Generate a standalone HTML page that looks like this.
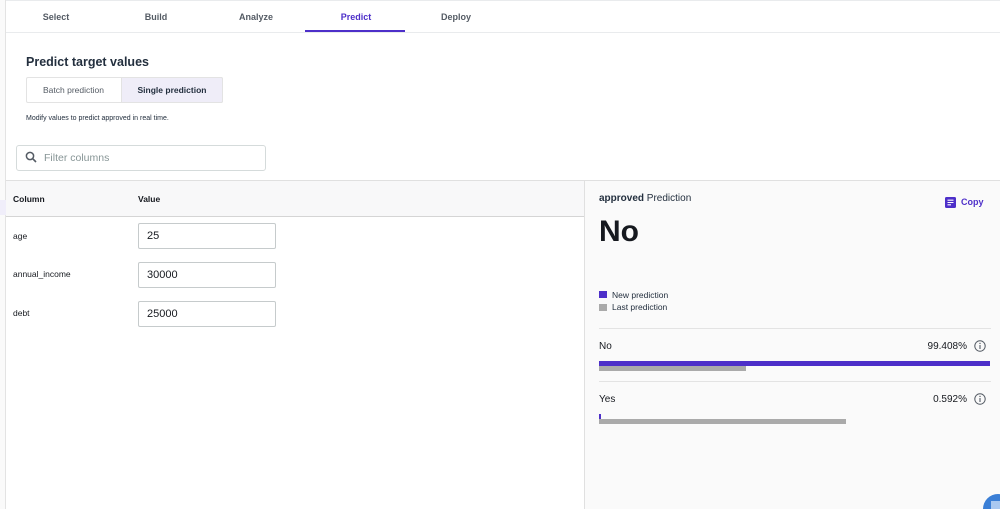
<!DOCTYPE html>
<html><head><style>
*{box-sizing:border-box;margin:0;padding:0}
html,body{width:1000px;height:509px;overflow:hidden}
body{background:#fff;font-family:"Liberation Sans",sans-serif;color:#16191f;position:relative}
.a{position:absolute}
.tab{position:absolute;top:0;height:32px;width:100px;text-align:center;line-height:34px;font-size:9px;font-weight:bold;color:#545b64}
.inp{position:absolute;left:138px;width:138px;height:26px;border:1px solid #c6cbcc;border-radius:2px;font-size:11px;padding-left:8px;line-height:24px;color:#16191f;background:#fff}
.lbl{position:absolute;left:13px;font-size:8.5px;color:#16191f}
</style></head><body>
<div class="a" style="left:0;top:0;width:6px;height:509px;background:#fafafa;border-right:1px solid #e3e3e3"></div>
<div class="a" style="left:0;top:200px;width:6px;height:15px;background:#f0eefa"></div>
<div class="a" style="left:6px;top:0;width:994px;height:1px;background:#e9ebed"></div>
<div class="a" style="left:6px;top:32px;width:994px;height:1px;background:#e9ebed"></div>
<div class="tab" style="left:6px">Select</div>
<div class="tab" style="left:106px">Build</div>
<div class="tab" style="left:206px">Analyze</div>
<div class="tab" style="left:306px;color:#4d2fc9">Predict</div>
<div class="tab" style="left:406px">Deploy</div>
<div class="a" style="left:305px;top:30px;width:100px;height:2px;background:#4d2fc9"></div>

<div class="a" style="left:26px;top:55px;font-size:12.5px;font-weight:bold;color:#232f3e">Predict target values</div>
<div class="a" style="left:26px;top:77px;width:197px;height:26px;border:1px solid #e3e3e3;border-radius:2px;background:#fff"></div>
<div class="a" style="left:121px;top:77px;width:102px;height:26px;background:#efedf8;border:1px solid #e3e3e3;border-radius:0 2px 2px 0"></div>
<div class="a" style="left:26px;top:77px;width:95px;line-height:26px;text-align:center;font-size:8.5px;color:#545b64">Batch prediction</div>
<div class="a" style="left:121px;top:77px;width:102px;line-height:26px;text-align:center;font-size:8.5px;font-weight:bold;color:#232f3e">Single prediction</div>
<div class="a" style="left:26px;top:115px;font-size:7px;color:#232f3e">Modify values to predict approved in real time.</div>

<div class="a" style="left:16px;top:145px;width:250px;height:26px;border:1px solid #d5dbdb;border-radius:3px;background:#fff"></div>
<svg class="a" style="left:25px;top:151px" width="12" height="12" viewBox="0 0 12 12"><circle cx="5" cy="5" r="3.6" fill="none" stroke="#545b64" stroke-width="1.5"/><path d="M7.6 7.6L11 11" stroke="#545b64" stroke-width="1.6"/></svg>
<div class="a" style="left:44px;top:152px;font-size:10.5px;color:#879596">Filter columns</div>

<div class="a" style="left:6px;top:180px;width:578px;height:37px;background:#f8f8f9;border-top:1px solid #e0e0e0;border-bottom:1px solid #d5d5d5"></div>
<div class="a" style="left:13px;top:194px;font-size:8.5px;font-weight:bold">Column</div>
<div class="a" style="left:138px;top:194px;font-size:8.5px;font-weight:bold">Value</div>
<div class="lbl" style="top:231px">age</div>
<div class="lbl" style="top:269px">annual_income</div>
<div class="lbl" style="top:308px">debt</div>
<div class="inp" style="top:223px">25</div>
<div class="inp" style="top:262px">30000</div>
<div class="inp" style="top:301px">25000</div>

<div class="a" style="left:584px;top:180px;width:416px;height:329px;background:#fafafa;border-left:1px solid #e0e0e0;border-top:1px solid #e0e0e0"></div>
<div class="a" style="left:599px;top:193px;font-size:10px;color:#232f3e"><b>approved</b> Prediction</div>
<svg class="a" style="left:945px;top:197px" width="11" height="11" viewBox="0 0 11 11"><rect width="11" height="11" rx="1.5" fill="#4d2fc9"/><path d="M2.5 3.2h6M2.5 5.5h6M2.5 7.8h3.5" stroke="#fff" stroke-width="1.1"/></svg>
<div class="a" style="left:961px;top:197px;font-size:9px;font-weight:bold;color:#4d2fc9">Copy</div>
<div class="a" style="left:599px;top:215px;font-size:30px;font-weight:bold;color:#16191f">No</div>
<div class="a" style="left:599px;top:291px;width:8px;height:7px;background:#4d2fc9"></div>
<div class="a" style="left:612px;top:290px;font-size:8.5px;color:#232f3e">New prediction</div>
<div class="a" style="left:599px;top:304px;width:8px;height:7px;background:#aaa"></div>
<div class="a" style="left:612px;top:302px;font-size:8.5px;color:#232f3e">Last prediction</div>
<div class="a" style="left:599px;top:328px;width:392px;height:1px;background:#e3e3e3"></div>
<div class="a" style="left:599px;top:341px;font-size:10px">No</div>
<div class="a" style="right:33px;top:341px;font-size:10px">99.408%</div>
<svg class="a" style="left:974px;top:340px" width="12" height="12" viewBox="0 0 12 12"><circle cx="6" cy="6" r="5.2" fill="none" stroke="#545b64" stroke-width="1"/><path d="M6 5v4" stroke="#545b64" stroke-width="1.1"/><circle cx="6" cy="3.4" r=".7" fill="#545b64"/></svg>
<div class="a" style="left:599px;top:361px;width:391px;height:5px;background:#4d2fc9"></div>
<div class="a" style="left:599px;top:366px;width:147px;height:5px;background:#aaa"></div>
<div class="a" style="left:599px;top:381px;width:392px;height:1px;background:#e3e3e3"></div>
<div class="a" style="left:599px;top:394px;font-size:10px">Yes</div>
<div class="a" style="right:33px;top:394px;font-size:10px">0.592%</div>
<svg class="a" style="left:974px;top:393px" width="12" height="12" viewBox="0 0 12 12"><circle cx="6" cy="6" r="5.2" fill="none" stroke="#545b64" stroke-width="1"/><path d="M6 5v4" stroke="#545b64" stroke-width="1.1"/><circle cx="6" cy="3.4" r=".7" fill="#545b64"/></svg>
<div class="a" style="left:599px;top:414px;width:2px;height:5px;background:#4d2fc9"></div>
<div class="a" style="left:599px;top:419px;width:247px;height:5px;background:#aaa"></div>
<div class="a" style="left:983px;top:494px;width:30px;height:30px;border-radius:50%;background:#3b7fd6"></div>
<div class="a" style="left:991px;top:501px;width:12px;height:8px;background:#a9c8f0"></div>
</body></html>
